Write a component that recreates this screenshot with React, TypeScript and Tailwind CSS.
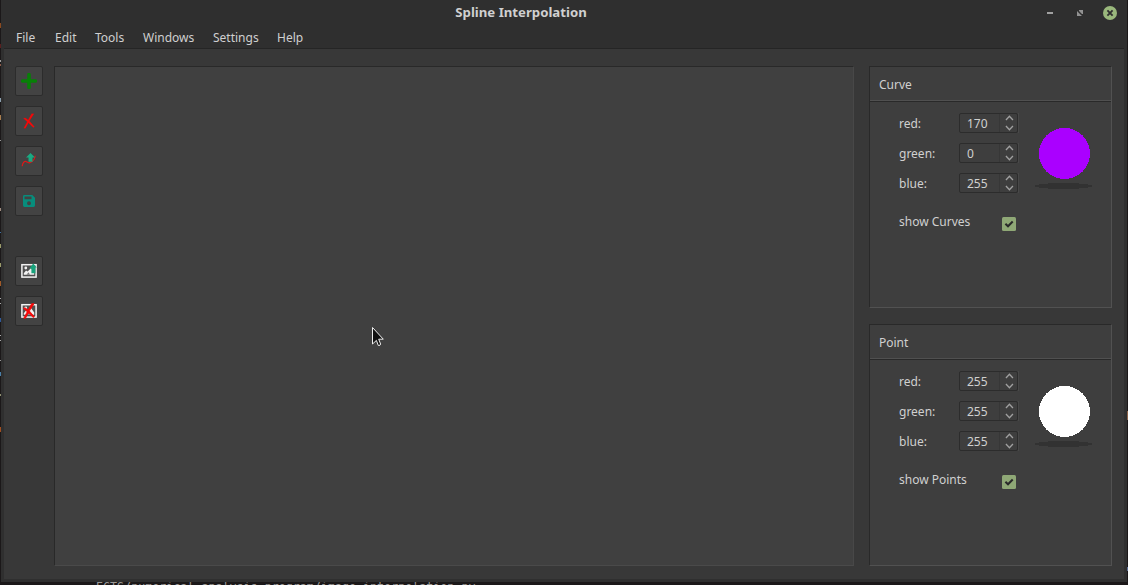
import type { ReactNode } from "react";

const menus = [
  { label: "File", width: "w-[39px]" },
  { label: "Edit", width: "w-[40px]" },
  { label: "Tools", width: "w-[48px]" },
  { label: "Windows", width: "w-[70px]" },
  { label: "Settings", width: "w-[64px]" },
  { label: "Help", width: "w-[40px]" },
];

const edgeMarks = [
  { y: 23, h: 5, color: "#8a4a20" },
  { y: 44, h: 4, color: "#5a1f1f" },
  { y: 60, h: 2, color: "#a0a0a0" },
  { y: 64, h: 2, color: "#8a5a48" },
  { y: 98, h: 4, color: "#8b9fae" },
  { y: 115, h: 5, color: "#a77c4d" },
  { y: 140, h: 1, color: "#999999" },
  { y: 208, h: 3, color: "#a08c80" },
  { y: 232, h: 1, color: "#3c6fa0" },
  { y: 244, h: 4, color: "#9a9a6a" },
  { y: 263, h: 4, color: "#9a9a6a" },
  { y: 281, h: 5, color: "#a05a28" },
  { y: 298, h: 1, color: "#aaaaaa" },
  { y: 303, h: 1, color: "#aaaaaa" },
  { y: 318, h: 4, color: "#2f5a9a" },
  { y: 335, h: 1, color: "#aaaaaa" },
  { y: 340, h: 1, color: "#aaaaaa" },
  { y: 360, h: 1, color: "#999999" },
  { y: 372, h: 4, color: "#4a7fa8" },
  { y: 394, h: 2, color: "#8f8f70" },
  { y: 427, h: 5, color: "#a04e20" },
];

function PlusIcon() {
  return (
    <svg width="16" height="16" viewBox="0 0 16 16">
      <path d="M8 1.6v12.8M1.6 8h12.8" stroke="#078007" strokeWidth="3.6" strokeLinecap="round" />
    </svg>
  );
}

function Cross({ thick = false }: { thick?: boolean }) {
  return (
    <g fill="#f80808" stroke="#f80808" strokeWidth={thick ? 0.8 : 0.2}>
      <path d="M10.6 .7H13L8.8 7.3L4.5 15.2H2.8L6.5 8.2Z" />
      <path d="M2.4 5.2L4.5 5.1L8.6 8.2L13.4 13.8L12.3 14.5L7.4 9.8Z" />
    </g>
  );
}

function CrossIcon() {
  return (
    <svg width="16" height="16" viewBox="0 0 16 16">
      <Cross />
    </svg>
  );
}

function CurveIcon() {
  return (
    <svg width="16" height="16" viewBox="0 0 16 16">
      <path d="M1.2 13.2C1.6 10 3.2 7.9 5 8.5C6.3 9 7 10.4 9 9.6C11.5 8.8 13.8 6.3 14.2 2.8" fill="none" stroke="#dd1818" strokeWidth="1.2" />
      <path d="M9.5 0L14 4.4H11.5V8.7H7.5V4.4H5Z" fill="#1aaa82" />
    </svg>
  );
}

function SaveIcon() {
  return (
    <svg width="16" height="16" viewBox="0 0 16 16">
      <path fillRule="evenodd" d="M3.4 2H11.3L14 4.7V12.6Q14 14 12.6 14H3.4Q2 14 2 12.6V3.4Q2 2 3.4 2ZM3.5 3.5V6.2H10.5V3.5ZM8 8.2A2 2 0 1 0 8 12.2A2 2 0 1 0 8 8.2Z" fill="#078d7c" />
    </svg>
  );
}

function PictureFrame() {
  return (
    <>
      <rect x=".9" y="1.7" width="14.2" height="12.4" fill="#505050" stroke="#f2f2f2" strokeWidth="1.5" />
      <path d="M2.8 11.8V10.2L5 7.5L6.7 8.6L10 5L13.2 9.5V11.8Z" fill="#f2f2f2" />
      <circle cx="4.8" cy="5" r="1.4" fill="#f2f2f2" />
      <path d="M5.5 11.8L7.5 9.2L9 11.8" fill="#777" />
    </>
  );
}

function PictureAddIcon() {
  return (
    <svg width="16" height="16" viewBox="0 0 16 16">
      <PictureFrame />
      <path d="M12.2 .6L15.8 4.6H14.4V10.2H10.4V5.6H8.5Z" fill="#18a37c" />
    </svg>
  );
}

function PictureRemoveIcon() {
  return (
    <svg width="16" height="16" viewBox="0 0 16 16">
      <PictureFrame />
      <Cross thick />
    </svg>
  );
}

function ToolButton({ label, children }: { label: string; children: ReactNode }) {
  return (
    <button aria-label={label} className="flex h-[30px] w-7 items-center justify-center rounded-[2px] border border-[#2c2c2c] bg-[#434343]">
      {children}
    </button>
  );
}

function SpinBox({ value }: { value: number }) {
  return (
    <div className="flex h-5 w-[60px]">
      <div className="flex h-5 w-[59px] rounded-[2px] border border-[#2c2c2c] bg-[#3e3e3e]">
        <span className="w-[39px] pl-[7px] leading-[19px]">{value}</span>
        <svg className="h-[18px] w-[18px] border-l border-[#373737]" viewBox="0 0 18 18" fill="none" stroke="#a0a0a0" strokeWidth="1.4">
          <path d="M6.3 5.9L10 1.9L13.7 5.9M6.3 12.1L10 16.1L13.7 12.1" />
        </svg>
      </div>
      <div className="h-5 w-px bg-[#484848]" />
    </div>
  );
}

function Panel({ title, values, circle, toggle }: { title: string; values: number[]; circle: string; toggle: string }) {
  return (
    <section className="flex h-[242px] w-[243px] flex-col border border-t-[#292929] border-r-[#515151] border-b-[#515151] border-l-[#292929] bg-[#3e3e3e]">
      <h2 className="h-[34px] shrink-0 border-b border-[#505050] pl-[9px] leading-[36px]">{title}</h2>
      <div className="h-px shrink-0 bg-[#292929]" />
      <div className="flex pt-[11px] pl-[29px]">
        <div className="flex flex-col gap-[10px]">
          {["red:", "green:", "blue:"].map((name, i) => (
            <div key={name} className="flex h-5">
              <span className="w-[60px] leading-[22px]">{name}</span>
              <SpinBox value={values[i]} />
            </div>
          ))}
        </div>
        <svg className="mt-3 ml-4 h-16 w-[58px]" viewBox="0 0 58 64">
          <circle cx="29.5" cy="28.5" r="25.5" fill={circle} shapeRendering="crispEdges" />
          <ellipse cx="28.5" cy="61" rx="28.5" ry="3" fill="#323232" shapeRendering="crispEdges" />
        </svg>
      </div>
      <div className="flex h-10 pt-[18px] pl-[29px]">
        <span className="w-[103px] leading-[22px]">{toggle}</span>
        <svg className="mt-[6px] h-[14px] w-[14px]" viewBox="0 0 14 14">
          <rect width="14" height="14" rx="1.5" fill="#8fa876" />
          <path d="M3.4 6.8L6 9.3L10.7 4.5" fill="none" stroke="#292929" strokeWidth="2" />
        </svg>
      </div>
    </section>
  );
}

export default function App() {
  return (
    <div className="relative h-[585px] w-[1128px] overflow-hidden bg-[#1b1819] px-px font-['Noto_Sans',sans-serif] text-[12px] text-[#d0d0d0]">
      {edgeMarks.map((m) => (
        <div key={m.y} className="absolute left-0 w-px" style={{ top: m.y, height: m.h, background: m.color }} />
      ))}
      <div className="absolute top-[411px] right-0 h-[9px] w-px bg-[#8a6248]" />
      <div className="absolute top-[567px] right-0 h-1 w-px bg-[#5d6f96]" />
      <div className="flex h-[582px] w-[1126px] flex-col bg-[#2f2f2f]">
        <header className="grid h-[26px] shrink-0 grid-cols-[1fr_auto_1fr] items-center">
          <div />
          <h1 className="h-[26px] pr-[86px] text-[13.2px] leading-[25px] font-bold">Spline Interpolation</h1>
          <svg className="h-6 w-[81px] justify-self-end" viewBox="0 0 81 24">
            <rect x="1" y="11" width="6" height="2" fill="#a0a0a0" />
            <path d="M33 9H37V13H36L33 10ZM31 10L36 15H35L31 11ZM31 11L35 15H31Z" fill="#929292" />
            <circle cx="64" cy="12" r="7" fill="#9ab87c" />
            <path d="M61.4 9.4L66.6 14.6M66.6 9.4L61.4 14.6" stroke="#2f2f2f" strokeWidth="1.8" />
          </svg>
        </header>
        <nav className="flex h-[22px] shrink-0 pl-[15px] leading-[23px]">
          {menus.map((m) => (
            <span key={m.label} className={m.width}>{m.label}</span>
          ))}
        </nav>
        <div className="mx-[3px] h-px shrink-0 bg-[#252525]" />
        <main className="mx-[3px] flex h-[530px] bg-[#383838] pt-[17px] pl-[11px]">
          <aside className="flex w-[39px] flex-col gap-[10px]">
            <ToolButton label="Add"><PlusIcon /></ToolButton>
            <ToolButton label="Delete"><CrossIcon /></ToolButton>
            <ToolButton label="Curve"><CurveIcon /></ToolButton>
            <ToolButton label="Save"><SaveIcon /></ToolButton>
            <div className="h-5" />
            <ToolButton label="Add picture"><PictureAddIcon /></ToolButton>
            <ToolButton label="Remove picture"><PictureRemoveIcon /></ToolButton>
          </aside>
          <div className="h-[500px] w-[800px] border border-t-[#292929] border-r-[#484848] border-b-[#4a4a4a] border-l-[#292929] bg-[#404040]" />
          <div className="ml-[15px] flex flex-col gap-4">
            <Panel title="Curve" values={[170, 0, 255]} circle="#aa00ff" toggle="show Curves" />
            <Panel title="Point" values={[255, 255, 255]} circle="#ffffff" toggle="show Points" />
          </div>
        </main>
      </div>
      <div className="h-[3px] overflow-hidden pl-[95px] font-['DejaVu_Sans_Mono',monospace] text-[11.68px] leading-[11px] whitespace-pre text-[#9b9997]">
        ECTS/numerical_analysis_program/image_interpolation.py
      </div>
      <svg className="absolute top-[326px] left-[371px] h-[22px] w-[14px]" viewBox="0 0 14 22">
        <path d="M1.5 1.5V18L5.4 14.4L7.3 19.5Q9.5 19.8 9.6 18L7.7 13.2H12.3Z" fill="#111" stroke="#eeeeee" strokeWidth="1" />
      </svg>
    </div>
  );
}
